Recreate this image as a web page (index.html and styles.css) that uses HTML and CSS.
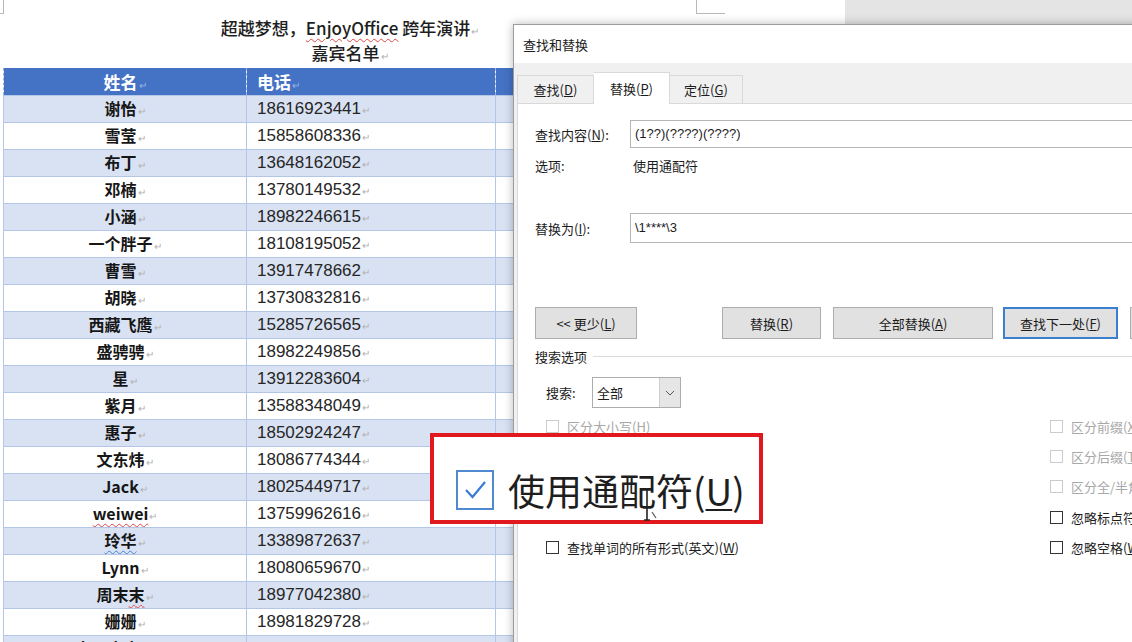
FILE: index.html
```html
<!DOCTYPE html>
<html lang="zh-CN">
<head>
<meta charset="utf-8">
<title>查找和替换</title>
<link rel="stylesheet" href="styles.css">
</head>
<body>
<div class="page">
  <div class="marks"><span class="mark mark-l"></span><span class="mark mark-r"></span></div>
  <div class="doc">
    <p class="title">超越梦想，<span class="spell">EnjoyOffice</span> 跨年演讲<span class="pm">↵</span></p>
    <p class="title">嘉宾名单<span class="pm">↵</span></p>
    <table class="guests">
      <colgroup><col class="c1"><col class="c2"><col class="c3"></colgroup>
      <tr class="head"><th class="name">姓名<span class="pm">↵</span></th><th class="phone">电话<span class="pm">↵</span></th><th></th></tr>
      <tr class="alt"><td class="name">谢怡<span class="pm">↵</span></td><td class="phone">18616923441<span class="pm">↵</span></td><td></td></tr>
      <tr><td class="name">雪莹<span class="pm">↵</span></td><td class="phone">15858608336<span class="pm">↵</span></td><td></td></tr>
      <tr class="alt"><td class="name">布丁<span class="pm">↵</span></td><td class="phone">13648162052<span class="pm">↵</span></td><td></td></tr>
      <tr><td class="name">邓楠<span class="pm">↵</span></td><td class="phone">13780149532<span class="pm">↵</span></td><td></td></tr>
      <tr class="alt"><td class="name">小涵<span class="pm">↵</span></td><td class="phone">18982246615<span class="pm">↵</span></td><td></td></tr>
      <tr><td class="name">一个胖子<span class="pm">↵</span></td><td class="phone">18108195052<span class="pm">↵</span></td><td></td></tr>
      <tr class="alt"><td class="name">曹雪<span class="pm">↵</span></td><td class="phone">13917478662<span class="pm">↵</span></td><td></td></tr>
      <tr><td class="name">胡晓<span class="pm">↵</span></td><td class="phone">13730832816<span class="pm">↵</span></td><td></td></tr>
      <tr class="alt"><td class="name">西藏飞鹰<span class="pm">↵</span></td><td class="phone">15285726565<span class="pm">↵</span></td><td></td></tr>
      <tr><td class="name">盛骋骋<span class="pm">↵</span></td><td class="phone">18982249856<span class="pm">↵</span></td><td></td></tr>
      <tr class="alt"><td class="name">星<span class="pm">↵</span></td><td class="phone">13912283604<span class="pm">↵</span></td><td></td></tr>
      <tr><td class="name">紫月<span class="pm">↵</span></td><td class="phone">13588348049<span class="pm">↵</span></td><td></td></tr>
      <tr class="alt"><td class="name">惠子<span class="pm">↵</span></td><td class="phone">18502924247<span class="pm">↵</span></td><td></td></tr>
      <tr><td class="name">文东炜<span class="pm">↵</span></td><td class="phone">18086774344<span class="pm">↵</span></td><td></td></tr>
      <tr class="alt"><td class="name">Jack<span class="pm">↵</span></td><td class="phone">18025449717<span class="pm">↵</span></td><td></td></tr>
      <tr><td class="name"><span class="spell">weiwei</span><span class="pm">↵</span></td><td class="phone">13759962616<span class="pm">↵</span></td><td></td></tr>
      <tr class="alt"><td class="name"><span class="spell blue">玲华</span><span class="pm">↵</span></td><td class="phone">13389872637<span class="pm">↵</span></td><td></td></tr>
      <tr><td class="name">Lynn<span class="pm">↵</span></td><td class="phone">18080659670<span class="pm">↵</span></td><td></td></tr>
      <tr class="alt"><td class="name">周末<span class="spell">末</span><span class="pm">↵</span></td><td class="phone">18977042380<span class="pm">↵</span></td><td></td></tr>
      <tr><td class="name">姗姗<span class="pm">↵</span></td><td class="phone">18981829728<span class="pm">↵</span></td><td></td></tr>
      <tr class="alt"><td class="name">十一度度K.K<span class="pm">↵</span></td><td class="phone">13917881945<span class="pm">↵</span></td><td></td></tr>
    </table>
  </div>
</div>

<div class="dialog">
  <div class="dlg-title">查找和替换</div>
  <div class="tabs">
    <div class="tab">查找(<u>D</u>)</div>
    <div class="tab active">替换(<u>P</u>)</div>
    <div class="tab">定位(<u>G</u>)</div>
  </div>
  <div class="panel">
    <div class="field-row find">
      <span class="flabel">查找内容(<u>N</u>):</span>
      <div class="input">(1??)(????)(????)</div>
    </div>
    <div class="opt-row"><span class="olabel">选项:</span><span>使用通配符</span></div>
    <div class="field-row repl">
      <span class="flabel">替换为(<u>I</u>):</span>
      <div class="input tall">\1****\3</div>
    </div>
    <div class="btn-row">
      <div class="btn b-less">&lt;&lt; 更少(<u>L</u>)</div>
      <div class="btn b-repl">替换(<u>R</u>)</div>
      <div class="btn b-all">全部替换(<u>A</u>)</div>
      <div class="btn b-next">查找下一处(<u>F</u>)</div>
      <div class="btn b-cancel"></div>
    </div>
    <div class="section"><span>搜索选项</span><span class="rule"></span></div>
    <div class="search-row">
      <span class="slabel">搜索:</span>
      <div class="select"><span class="sval">全部</span><span class="sbtn"><svg width="10" height="6" viewBox="0 0 10 6"><path d="M1 1 L5 5 L9 1" fill="none" stroke="#555" stroke-width="1"/></svg></span></div>
    </div>
    <div class="checks">
      <div class="chk dis"><span class="box"></span>区分大小写(<u>H</u>)</div>
      <div class="chk dis"><span class="box"></span>区分前缀(<u>X</u>)</div>
      <div class="chk"></div>
      <div class="chk dis"><span class="box"></span>区分后缀(<u>T</u>)</div>
      <div class="chk"></div>
      <div class="chk dis"><span class="box"></span>区分全/半角(<u>M</u>)</div>
      <div class="chk"></div>
      <div class="chk"><span class="box"></span>忽略标点符号(<u>S</u>)</div>
      <div class="chk"><span class="box"></span>查找单词的所有形式(英文)(<u>W</u>)</div>
      <div class="chk"><span class="box"></span>忽略空格(<u>W</u>)</div>
    </div>
  </div>
</div>

<div class="callout">
  <span class="bigbox"><svg width="30" height="30" viewBox="0 0 30 30"><path d="M6 15 L12.5 22 L25 7" fill="none" stroke="#3a7bd5" stroke-width="2.2"/></svg></span>
  <span class="bigtext">使用通配符(<u>U</u>)</span>
</div>

<svg class="cursor" width="20" height="40" viewBox="0 0 20 40">
  <path d="M4 4 L4 36" stroke="#222" stroke-width="1.6" fill="none"/>
  <path d="M1 36 L7 36" stroke="#222" stroke-width="1.4" fill="none"/>
  <path d="M9 28 L13 34" stroke="#555" stroke-width="1.2" fill="none"/>
</svg>
</body>
</html>
```

FILE: styles.css
```css
* { box-sizing: border-box; }
html, body { margin: 0; padding: 0; }
body {
  width: 1132px;
  height: 642px;
  overflow: hidden;
  position: relative;
  background: #e4e4e4;
  font-family: "Noto Sans CJK SC", "Liberation Sans", sans-serif;
}

/* ---------- document page ---------- */
.page { width: 845px; height: 642px; background: #fff; }
.marks { display: flex; height: 15px; }
.mark { height: 14px; border-bottom: 1px solid #b8b8b8; }
.mark-l { width: 4px; border-right: 1px solid #b8b8b8; }
.mark-r { width: 29px; margin-left: 692px; border-left: 1px solid #b8b8b8; }

.doc { margin-left: 3px; width: 694px; }
.title {
  margin: 0;
  height: 25px;
  text-align: center;
  font-size: 17px;
  line-height: 25px;
  color: #1e1e1e;
  font-weight: 500;
  white-space: nowrap;
}
.pm { font-size: 10px; line-height: 1; color: #b0b0b0; margin-left: 1px; font-weight: 400; }
.spell {
  text-decoration: underline wavy #e04545;
  text-decoration-thickness: 1px;
  text-underline-offset: 3px;
}
.spell.blue { text-decoration-color: #4a7fd8; }

.guests {
  border-collapse: collapse;
  table-layout: fixed;
  width: 694px;
  margin-top: 3px;
}
.c1 { width: 243px; }
.c2 { width: 249px; }
.c3 { width: 202px; }
.guests tr { height: 27px; }
.guests td, .guests th {
  padding: 0;
  height: 27px;
  line-height: 25px;
  border: 1px solid #b4c6e7;
  white-space: nowrap;
  overflow: hidden;
}
.guests .head th {
  background: #4472c4;
  color: #fff;
  font-size: 17px;
  font-weight: 700;
  border: 1px dashed #9db4e0;
  border-top: 0;
  border-bottom: 0;
}
.guests .head .pm { color: #9fb5e2; }
.guests tr.alt td { background: #d9e2f3; }
.name {
  text-align: center;
  font-size: 16px;
  font-weight: 700;
  color: #161616;
}
.phone {
  text-align: left;
  padding-left: 10px !important;
  font-family: "Liberation Sans", sans-serif;
  font-size: 17px;
  color: #262626;
}
.head .phone { font-family: "Noto Sans CJK SC", sans-serif; font-size: 17px; }

/* ---------- dialog ---------- */
.dialog {
  position: absolute;
  left: 513px;
  top: 24px;
  width: 640px;
  height: 640px;
  background: #f0f0f0;
  border: 1px solid #9c9c9c;
  box-shadow: 0 0 9px rgba(0, 0, 0, 0.28);
  font-size: 13px;
  color: #1c1c1c;
  display: flex;
  flex-direction: column;
}
.dlg-title {
  height: 38px;
  background: #fff;
  padding-left: 9px;
  line-height: 40px;
  font-size: 13px;
}
.tabs {
  height: 40px;
  display: flex;
  align-items: flex-end;
  padding-left: 3px;
  position: relative;
  z-index: 2;
}
.tab {
  height: 28px;
  line-height: 27px;
  border: 1px solid #d9d9d9;
  border-bottom: 0;
  background: #f0f0f0;
  text-align: center;
  width: 77px;
}
.tab:nth-child(3) { width: 73px; border-left: 0; }
.tab.active {
  height: 32px;
  line-height: 31px;
  background: #fff;
  width: 76px;
  margin-bottom: -1px;
  border-left: 0;
}
.panel {
  flex: 1;
  margin-left: 3px;
  background: #fff;
  border-top: 1px solid #d9d9d9;
  border-left: 1px solid #d9d9d9;
  padding-left: 17px;
  position: relative;
  z-index: 1;
}
.field-row { display: flex; align-items: center; }
.field-row.find { margin-top: 16px; }
.field-row.repl { margin-top: 38px; }
.flabel { width: 95px; }
.input {
  flex: 1;
  height: 28px;
  border: 1px solid #b5b5b5;
  background: #fff;
  padding-left: 4px;
  line-height: 26px;
  font-family: "Liberation Sans", sans-serif;
  font-size: 13px;
}
.input.tall { height: 30px; line-height: 28px; }
.opt-row { margin-top: 7px; height: 20px; display: flex; align-items: center; }
.olabel { width: 98px; }

.btn-row { display: flex; margin-top: 64px; height: 32px; }
.btn {
  height: 32px;
  background: #e1e1e1;
  border: 1px solid #adadad;
  display: flex;
  align-items: center;
  justify-content: center;
  flex: none;
}
.b-less { width: 102px; }
.b-repl { width: 99px; margin-left: 85px; }
.b-all { width: 160px; margin-left: 12px; }
.b-next { width: 115px; margin-left: 10px; border: 2px solid #3a7fd0; }
.b-cancel { width: 100px; margin-left: 12px; }

.section { margin-top: 8px; height: 19px; display: flex; align-items: center; }
.rule { flex: 1; border-top: 1px solid #dcdcdc; margin-left: 6px; }

.search-row { margin-top: 11px; display: flex; align-items: center; padding-left: 11px; }
.slabel { width: 46px; }
.select {
  width: 89px;
  height: 31px;
  border: 1px solid #adadad;
  background: #fff;
  display: flex;
}
.sval { flex: 1; padding-left: 4px; line-height: 29px; }
.sbtn {
  width: 21px;
  background: #e6e6e6;
  border-left: 1px solid #cdcdcd;
  display: flex;
  align-items: center;
  justify-content: center;
}

.checks {
  margin-top: 3px;
  padding-left: 11px;
  display: grid;
  grid-template-columns: 504px 300px;
  grid-auto-rows: 30.3px;
}
.chk { display: flex; align-items: center; white-space: nowrap; }
.box {
  width: 13px;
  height: 13px;
  border: 1px solid #333;
  background: #fff;
  margin-right: 8px;
  flex: none;
}
.chk.dis { color: #a8a8a8; }
.chk.dis .box { border-color: #cccccc; }

/* ---------- red callout ---------- */
.callout {
  position: absolute;
  left: 430px;
  top: 433px;
  width: 333px;
  height: 91px;
  border: 4px solid #e1191e;
  background: #fff;
  display: flex;
  align-items: center;
  padding: 22px 0 0 22px;
  z-index: 5;
}
.bigbox {
  width: 38px;
  height: 40px;
  border: 2px solid #5089cf;
  display: flex;
  align-items: center;
  justify-content: center;
  flex: none;
}
.bigtext {
  margin-left: 14px;
  font-size: 37px;
  line-height: 44px;
  color: #1e1e1e;
  white-space: nowrap;
}
.bigtext u { text-underline-offset: 3px; text-decoration-thickness: 2px; }

.cursor { position: absolute; left: 643px; top: 484px; z-index: 6; }
```
